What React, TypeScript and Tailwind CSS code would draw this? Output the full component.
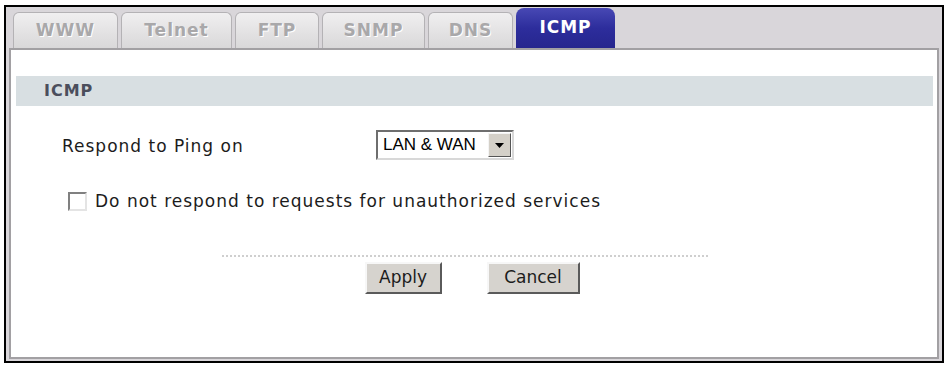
import { FC } from "react";

const tabs = [
  { name: "WWW", w: "w-[105px]" },
  { name: "Telnet", w: "w-[111px]" },
  { name: "FTP", w: "w-[84px]" },
  { name: "SNMP", w: "w-[103px]" },
  { name: "DNS", w: "w-[85px]" },
];

const App: FC = () => {
  return (
    <div className="w-[948px] h-[368px] bg-white pt-[5px] pl-[4px] font-['DejaVu_Sans',sans-serif]">
      <div className="w-[940px] h-[358px] border-2 border-black bg-[#d9d6da] flex flex-col px-[3px] pb-[2px]">
        {/* tab bar */}
        <div className="h-[41px] flex items-end gap-[3px] pl-[4px]">
          {tabs.map((t) => (
            <div
              key={t.name}
              className={`${t.w} h-[36px] rounded-t-[6px] border border-b-0 border-[#b4b2b5] bg-gradient-to-b from-[#f0eff0] to-[#d9d8d9] flex items-center justify-center text-[17px] tracking-[1px] font-bold text-[#a9a8aa] [text-shadow:1px_1px_0_#ffffff]`}
            >
              {t.name}
            </div>
          ))}
          <div className="w-[99px] h-[40px] rounded-t-[8px] bg-gradient-to-b from-[#4848b4] via-[#2d2d9c] to-[#26268e] flex items-center justify-center text-[17px] tracking-[1px] font-bold text-white">
            ICMP
          </div>
        </div>

        {/* content panel */}
        <div className="flex-1 border-2 border-[#a2a0a3] bg-white flex flex-col">
          <div className="mt-[26px] ml-[5px] mr-[4px] h-[30px] bg-[#d8dfe2] flex items-center pl-[28px] text-[16px] tracking-[1px] font-bold text-[#4b4e5c]">
            ICMP
          </div>

          <div className="mt-[24px] flex items-center pl-[51px] h-[30px]">
            <span className="w-[314px] pt-[4px] text-[17px] tracking-[1px] text-[#1c1c1c]">Respond to Ping on</span>
            <div className="w-[138px] h-[30px] border-2 border-t-[#6e6e6e] border-l-[#6e6e6e] border-b-[#d8d8d8] border-r-[#d8d8d8] bg-white flex items-center">
              <span className="flex-1 pl-[5px] text-[17px] text-black font-['Liberation_Sans',sans-serif]">
                LAN &amp; WAN
              </span>
              <div className="w-[23px] h-[24px] mr-[1px] bg-[#d4d0c8] border border-t-[#f4f4f4] border-l-[#f4f4f4] border-b-[#555] border-r-[#555] flex items-center justify-center">
                <svg width="9" height="5" viewBox="0 0 9 5">
                  <path d="M0 0h9L4.5 5z" fill="#000" />
                </svg>
              </div>
            </div>
          </div>

          <div className="mt-[29px] flex items-center pl-[57px]">
            <div className="w-[19px] h-[19px] border-2 border-t-[#808080] border-l-[#808080] border-b-[#e4e4e4] border-r-[#e4e4e4] bg-white" />
            <span className="ml-[8px] text-[17px] tracking-[1px] text-[#1c1c1c]">
              Do not respond to requests for unauthorized services
            </span>
          </div>

          <div className="mt-[40px] ml-[211px] w-[486px] border-t-2 border-dotted border-[#cfcfcf]" />

          <div className="mt-[5px] flex justify-center gap-[45px] pr-[4px]">
            <button className="w-[77px] h-[32px] bg-[#d6d3ce] border-2 border-t-[#f7f7f7] border-l-[#f7f7f7] border-b-[#5a5a5a] border-r-[#5a5a5a] text-[17px] text-[#1c1c1c]">
              Apply
            </button>
            <button className="w-[93px] h-[32px] bg-[#d6d3ce] border-2 border-t-[#f7f7f7] border-l-[#f7f7f7] border-b-[#5a5a5a] border-r-[#5a5a5a] text-[17px] text-[#1c1c1c]">
              Cancel
            </button>
          </div>
        </div>
      </div>
    </div>
  );
};

export default App;
